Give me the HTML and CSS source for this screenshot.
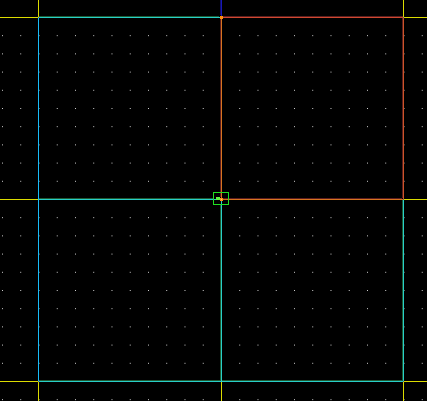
FILE: index.html
```html
<!DOCTYPE html>
<html>
<head>
<meta charset="utf-8">
<link rel="stylesheet" href="styles.css">
</head>
<body>
<div class="canvas">
<svg class="view" width="427" height="401" viewBox="0 0 427 401" xmlns="http://www.w3.org/2000/svg">
  <defs>
    <pattern id="dots" patternUnits="userSpaceOnUse" x="2" y="-1.2" width="18.25" height="18.2">
      <rect class="dot" x="0" y="0" width="1" height="1"/>
    </pattern>
  </defs>
  <rect x="0" y="0" width="427" height="401" fill="url(#dots)"/>

  <!-- outer (yellow) extensions -->
  <line class="ln yellow" x1="38.5" y1="0" x2="38.5" y2="17"/>
  <line class="ln yellow" x1="0" y1="17.5" x2="38" y2="17.5"/>
  <line class="ln yellow" x1="403.5" y1="0" x2="403.5" y2="17"/>
  <line class="ln yellow" x1="404" y1="17.5" x2="427" y2="17.5"/>
  <line class="ln yellow" x1="0" y1="199.5" x2="38" y2="199.5"/>
  <line class="ln yellow" x1="404" y1="199.5" x2="427" y2="199.5"/>
  <line class="ln yellow" x1="0" y1="381.5" x2="38" y2="381.5"/>
  <line class="ln yellow" x1="404" y1="381.5" x2="427" y2="381.5"/>
  <line class="ln yellow" x1="38.5" y1="382" x2="38.5" y2="401"/>
  <line class="ln yellow" x1="221.5" y1="382" x2="221.5" y2="401"/>
  <line class="ln yellow" x1="403.5" y1="382" x2="403.5" y2="401"/>

  <!-- blue axis stub -->
  <line class="ln navy-soft" x1="220.5" y1="0" x2="220.5" y2="15"/>
  <line class="ln navy" x1="221.5" y1="0" x2="221.5" y2="16"/>

  <!-- soft edges of the geometry lines -->
  <line class="ln red-soft" x1="222" y1="16.5" x2="403" y2="16.5"/>
  <line class="ln red-soft" x1="402.5" y1="18" x2="402.5" y2="198"/>
  <line class="ln red-soft" x1="223" y1="198.5" x2="402" y2="198.5"/>
  <line class="ln red-soft" x1="220.5" y1="19" x2="220.5" y2="197"/>
  <line class="ln green-soft" x1="39" y1="16.5" x2="219" y2="16.5"/>
  <line class="ln green-soft" x1="39" y1="198.5" x2="213" y2="198.5"/>
  <line class="ln green-soft" x1="220.5" y1="205" x2="220.5" y2="381"/>
  <line class="ln green-soft" x1="402.5" y1="200" x2="402.5" y2="381"/>
  <line class="ln green-soft" x1="39" y1="380.5" x2="402" y2="380.5"/>

  <!-- red/orange quadrant -->
  <line class="ln red" x1="222" y1="17.5" x2="403" y2="17.5"/>
  <line class="ln red2" x1="403.5" y1="18" x2="403.5" y2="199"/>
  <line class="ln orange" x1="222" y1="199.5" x2="403" y2="199.5"/>
  <line class="ln orange" x1="221.5" y1="18" x2="221.5" y2="199"/>

  <!-- cyan lines -->
  <line class="ln teal" x1="39" y1="17.5" x2="221" y2="17.5"/>
  <line class="ln teal" x1="39" y1="199.5" x2="221" y2="199.5"/>
  <line class="ln teal" x1="221.5" y1="200" x2="221.5" y2="381"/>
  <line class="ln teal" x1="403.5" y1="200" x2="403.5" y2="381"/>
  <line class="ln teal" x1="39" y1="381.5" x2="403" y2="381.5"/>
  <line class="ln cyan" x1="38.5" y1="18" x2="38.5" y2="381"/>

  <!-- points -->
  <rect class="pt" x="220" y="16" width="3" height="3"/>
  <rect class="sel" x="213.5" y="192.5" width="15" height="12"/>
  <rect class="sel-fill" x="216" y="197" width="4" height="3"/>
  <rect class="pt" x="220" y="198" width="3" height="3"/>
  <rect class="pt-core" x="221" y="199" width="1" height="1"/>
</svg>
</div>
</body>
</html>
```
FILE: styles.css
```css
html, body {
  margin: 0;
  padding: 0;
  background: #000;
  overflow: hidden;
}
.canvas {
  width: 427px;
  height: 401px;
  background: #000;
}
.view {
  display: block;
  shape-rendering: crispEdges;
}
.dot { fill: #d8d8d8; }
.ln { stroke-width: 1; }
.yellow { stroke: #dcdc00; }
.navy { stroke: #1818b8; }
.navy-soft { stroke: #10106a; }
.red { stroke: #d04830; }
.red2 { stroke: #cc5428; }
.orange { stroke: #d87420; }
.teal { stroke: #28cfc8; }
.cyan { stroke: #18bcf8; }
.red-soft { stroke: #5a1e1e; }
.green-soft { stroke: #1e5a34; }
.pt { fill: #ff9010; }
.pt-core { fill: #ffe060; }
.sel { fill: none; stroke: #20e020; stroke-width: 1; }
.sel-fill { fill: #60f040; }
```
